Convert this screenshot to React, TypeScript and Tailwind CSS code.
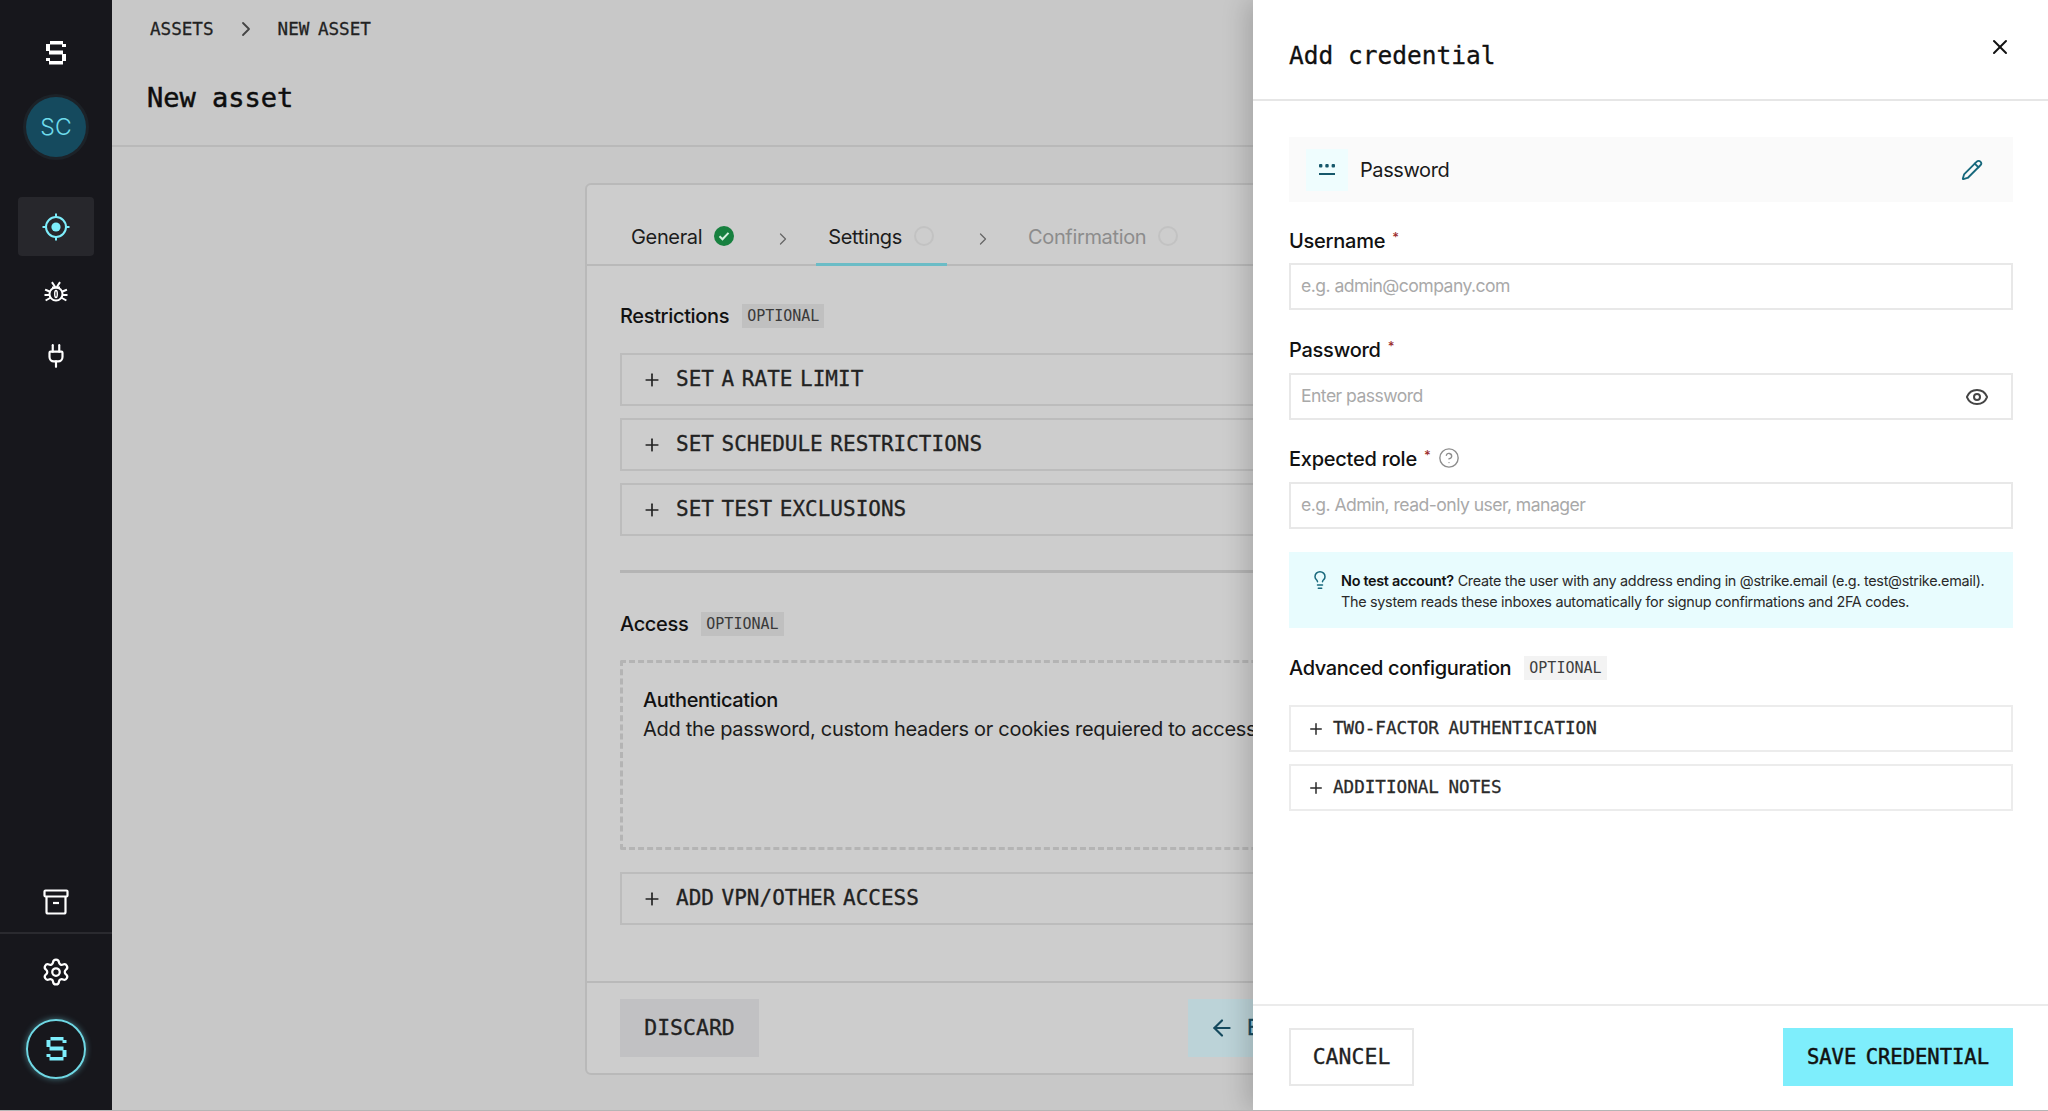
import { ReactNode } from "react";
import { ArrowLeft, ArrowRight, ChevronRight, CircleHelp, Eye, Lightbulb, Pencil, Plug, Plus, Settings, X } from "lucide-react";

const MONO = "font-['DejaVu_Sans_Mono','Liberation_Mono',monospace] [-webkit-text-stroke:0.3px_currentColor]";

function Logo({ color, className }: { color: string; className?: string }) {
  return (
    <svg viewBox="0 0 20 24" className={className} fill={color}>
      <rect x="4" y="0" width="13" height="3.5" />
      <rect x="0" y="3" width="4" height="7" />
      <rect x="16" y="3" width="4" height="3" />
      <rect x="3" y="9.5" width="14" height="4" />
      <rect x="16" y="13" width="4" height="7" />
      <rect x="0" y="17" width="4" height="3" />
      <rect x="3" y="20" width="14" height="3.5" />
    </svg>
  );
}

function BugIcon() {
  return (
    <svg viewBox="0 0 24 24" className="h-6 w-6" fill="none" stroke="#fff" strokeWidth="2" strokeLinecap="square">
      <circle cx="12" cy="14" r="6.5" />
      <path d="M8.5 3l2 3M15.5 3l-2 3M9 7.5h6M2 10l3.5 1.5M22 10l-3.5 1.5M1.5 15h3.5M22.5 15H19M2.5 20l3.5-2M21.5 20l-3.5-2" />
      <path d="M12 10.5c-1 0-1.3 1.5-1.3 3.5s.3 3.5 1.3 3.5 1.3-1.5 1.3-3.5-.3-3.5-1.3-3.5z" strokeWidth="1.4" />
    </svg>
  );
}

function TargetIcon() {
  return (
    <svg viewBox="0 0 28 28" className="h-7 w-7" fill="none" stroke="#7eeefc" strokeWidth="2">
      <circle cx="14" cy="14" r="10" />
      <circle cx="14" cy="14" r="4.6" fill="#7eeefc" stroke="none" />
      <path d="M14 0.5v3.5M14 24v3.5M0.5 14h3.5M24 14h3.5" />
    </svg>
  );
}

function ArchiveIcon() {
  return (
    <svg viewBox="0 0 26 26" className="h-[26px] w-[26px]" fill="none" stroke="#fff" strokeWidth="2.2">
      <rect x="1.5" y="1.5" width="23" height="6" rx="1" />
      <path d="M3.5 7.5V23a1.5 1.5 0 0 0 1.5 1.5h16a1.5 1.5 0 0 0 1.5-1.5V7.5" />
      <path d="M10 14h6" />
    </svg>
  );
}

function CheckBadge() {
  return (
    <svg viewBox="0 0 20 20" className="h-5 w-5">
      <circle cx="10" cy="10" r="10" fill="#17803f" />
      <path d="M5.5 10.3l3 3 6-6.4" fill="none" stroke="#d6f0df" strokeWidth="2" />
    </svg>
  );
}

function Optional({ tone }: { tone: "dim" | "light" }) {
  return (
    <span
      className={`font-['DejaVu_Sans_Mono','Liberation_Mono',monospace] flex h-[24px] items-center px-[5px] text-[15px] ${
        tone === "dim" ? "bg-[#c0c0c0] text-[#3a3a3a]" : "bg-[#f3f3f3] text-[#3f3f3f]"
      }`}
    >
      OPTIONAL
    </span>
  );
}

function DimRow({ label, className }: { label: string; className?: string }) {
  return (
    <div className={`flex h-[53px] items-center gap-[14px] border-2 border-[#bcbcbc] pl-[20px] text-[#222] ${className ?? ""}`}>
      <Plus className="h-[20px] w-[20px]" strokeWidth={2} />
      <span className={`${MONO} text-[21px] [word-spacing:-5px]`}>{label}</span>
    </div>
  );
}

function Step({ label, tone, badge, active }: { label: string; tone: string; badge: ReactNode; active?: boolean }) {
  return (
    <div className={`relative flex h-full items-center gap-[12px] pl-[12px] pr-[13px] ${tone}`}>
      <span className="mt-[2px] text-[20px] tracking-[-0.35px]">{label}</span>
      <span className="-mt-[1px]">{badge}</span>
      {active && <span className="absolute inset-x-0 -bottom-[2px] h-[3px] bg-[#6bbcc6]" />}
    </div>
  );
}

const Ring = () => <span className="block h-5 w-5 rounded-full border-2 border-[#c2c2c2]" />;

function Field({
  label,
  placeholder,
  help,
  eye,
  className,
  gapClass,
}: {
  label: string;
  placeholder: string;
  help?: boolean;
  eye?: boolean;
  className?: string;
  gapClass?: string;
}) {
  return (
    <div className={className}>
      <div className="flex h-[24px] items-center text-[20px] font-medium tracking-[-0.25px] text-[#111]">
        {label}
        <span className="mb-[6px] ml-[7px] text-[13px] text-[#9b2c2c]">*</span>
        {help && <CircleHelp className="ml-[8px] mb-[2px] h-[22px] w-[22px] text-[#8d8d8d]" strokeWidth={1.5} />}
      </div>
      <div className={`${gapClass ?? "mt-[11px]"} flex h-[47px] items-center border-2 border-[#e8e8e8] bg-white pl-[10px] pr-[22px]`}>
        <input
          readOnly
          placeholder={placeholder}
          className="min-w-0 flex-1 bg-transparent text-[17.6px] tracking-[-0.55px] outline-none placeholder:text-[#a9a9a9]"
        />
        {eye && <Eye className="h-[24px] w-[24px] text-[#444]" strokeWidth={2} />}
      </div>
    </div>
  );
}

function LightRow({ label, className }: { label: string; className?: string }) {
  return (
    <div className={`flex h-[47px] items-center gap-[8px] border-2 border-[#ececec] pl-[16px] text-[#2a2a2a] ${className ?? ""}`}>
      <Plus className="h-[18px] w-[18px]" strokeWidth={2} />
      <span className={`${MONO} text-[17.6px] [word-spacing:-1px]`}>{label}</span>
    </div>
  );
}

function NavItem({ children, className }: { children: ReactNode; className?: string }) {
  return <div className={`flex h-[59px] w-[76px] items-center justify-center ${className ?? ""}`}>{children}</div>;
}

export default function App() {
  return (
    <div className="relative flex h-[1111px] w-[2048px] overflow-hidden border-b border-[#b5b5b5] bg-[#c8c8c8] font-['Inter',sans-serif]">
      <aside className="flex w-[112px] shrink-0 flex-col items-center bg-[#17171c]">
        <Logo color="#ffffff" className="mt-[41px] h-[24px] w-[20px]" />
        <div className="mt-[32px] flex h-[60px] w-[60px] items-center justify-center rounded-full bg-[#154a5e] text-[23px] font-light text-[#6fdcec] shadow-[0_0_0_3px_#1c2228]">
          SC
        </div>
        <NavItem className="mt-[40px] rounded-[4px] bg-[#27272c]">
          <TargetIcon />
        </NavItem>
        <NavItem className="mt-[6px]">
          <BugIcon />
        </NavItem>
        <NavItem className="mt-[5px]">
          <Plug className="h-[26px] w-[26px] text-white" strokeWidth={2} />
        </NavItem>
        <NavItem className="mt-auto">
          <ArchiveIcon />
        </NavItem>
        <div className="mt-[1px] h-[2px] w-full bg-[#2a2a2f]" />
        <NavItem className="mt-[8px]">
          <Settings className="h-[30px] w-[30px] text-white" strokeWidth={1.8} />
        </NavItem>
        <div className="mb-[31px] mt-[18px] flex h-[60px] w-[60px] items-center justify-center rounded-full border-2 border-[#6fd8e4] shadow-[0_0_6px_rgba(126,238,252,0.45)]">
          <Logo color="#7eeefc" className="h-[24px] w-[21px]" />
        </div>
      </aside>

      <main className="flex min-w-0 flex-1 flex-col">
        <header className="h-[147px] shrink-0 border-b-2 border-[#b9b9b9] pl-[35px]">
          <div className={`${MONO} mt-[19px] flex h-[20px] items-center text-[17.6px] text-[#222] [word-spacing:-2px]`}>
            <span className="pl-[3px]">ASSETS</span>
            <ChevronRight className="mx-[20px] h-[24px] w-[24px] text-[#444]" strokeWidth={1.8} />
            <span>NEW ASSET</span>
          </div>
          <h1 className={`${MONO} mt-[39px] text-[27px] leading-[40px] text-[#0d0d0d] [-webkit-text-stroke:0.5px_#0d0d0d]`}>New asset</h1>
        </header>
        <div className="flex flex-1 justify-center pt-[36px]">
          <section className="flex h-[892px] w-[990px] shrink-0 flex-col rounded-[6px] border-2 border-[#b9b9b9] bg-[#cdcdcd]">
            <nav className="flex h-[81px] items-end border-b-2 border-[#b9b9b9] pl-[32px]">
              <div className="flex h-[56px] items-center">
                <Step label="General" tone="text-[#1c1c1c]" badge={<CheckBadge />} />
                <ChevronRight className="ml-[26px] mr-[23px] mt-[6px] h-[20px] w-[20px] text-[#666]" strokeWidth={1.5} />
                <Step label="Settings" tone="text-[#1c1c1c]" badge={<Ring />} active />
                <ChevronRight className="ml-[26px] mr-[23px] mt-[6px] h-[20px] w-[20px] text-[#666]" strokeWidth={1.5} />
                <Step label="Confirmation" tone="text-[#8c8c8c]" badge={<Ring />} />
              </div>
            </nav>
            <div className="flex-1 pl-[33px]">
              <div className="mt-[37px] flex h-[26px] items-center gap-[13px]">
                <span className="text-[20px] font-medium tracking-[-0.35px] text-[#111]">Restrictions</span>
                <Optional tone="dim" />
              </div>
              <DimRow label="SET A RATE LIMIT" className="mt-[24px]" />
              <DimRow label="SET SCHEDULE RESTRICTIONS" className="mt-[12px]" />
              <DimRow label="SET TEST EXCLUSIONS" className="mt-[12px]" />
              <div className="mt-[34px] h-[3px] bg-[#b4b4b4]" />
              <div className="mt-[38px] flex h-[26px] items-center gap-[13px]">
                <span className="text-[20px] font-medium tracking-[-0.35px] text-[#111]">Access</span>
                <Optional tone="dim" />
              </div>
              <div className="mt-[23px] h-[190px] overflow-hidden rounded-[2px] border-[3px] border-dashed border-[#b4b4b4] pl-[20px] pt-[23px]">
                <div className="text-[20px] font-medium leading-[28px] tracking-[-0.35px] text-[#111]">Authentication</div>
                <div className="whitespace-nowrap text-[20px] leading-[30px] tracking-[-0.3px] text-[#1c1c1c]">
                  Add the password, custom headers or cookies requiered to access
                </div>
              </div>
              <DimRow label="ADD VPN/OTHER ACCESS" className="mt-[22px]" />
            </div>
            <footer className="flex h-[92px] items-center justify-between border-t-2 border-[#b9b9b9] px-[33px]">
              <div className={`${MONO} flex h-[58px] w-[139px] items-center justify-center bg-[#c1c1c3] text-[21.5px] text-[#222]`}>DISCARD</div>
              <div className="flex gap-[12px]">
                <div className={`${MONO} flex h-[58px] w-[170px] items-center gap-[12px] bg-[#bcd3d8] pl-[21px] text-[21.5px] text-[#154a5e]`}>
                  <ArrowLeft className="h-[26px] w-[26px]" />
                  BACK
                </div>
                <div className={`${MONO} flex h-[58px] w-[170px] items-center justify-center gap-[10px] bg-[#6fc0cc] text-[21.5px] text-[#111]`}>
                  NEXT
                  <ArrowRight className="h-[26px] w-[26px]" />
                </div>
              </div>
            </footer>
          </section>
        </div>
      </main>

      <aside className="absolute inset-y-0 right-0 flex w-[795px] flex-col bg-white shadow-[-6px_0_24px_rgba(0,0,0,0.18)]">
        <div className="relative flex h-[101px] shrink-0 items-center border-b-2 border-[#e6e6e6] pl-[36px]">
          <h2 className={`${MONO} mt-[14px] text-[24.5px] text-[#111]`}>Add credential</h2>
          <X className="absolute right-[36px] top-[35px] h-[24px] w-[24px] text-[#111]" strokeWidth={2} />
        </div>
        <div className="flex-1 pl-[36px] pr-[35px] pt-[36px]">
          <div className="flex h-[65px] items-center bg-[#fafafa] pl-[17px] pr-[30px]">
            <div className="flex h-[42px] w-[42px] items-center justify-center bg-[#effdfe]">
              <svg viewBox="0 0 18 14" className="h-[14px] w-[18px]" fill="#17586b">
                <rect x="1" y="1" width="3.4" height="3.4" rx="1" />
                <rect x="7.3" y="1" width="3.4" height="3.4" rx="1" />
                <rect x="13.6" y="1" width="3.4" height="3.4" rx="1" />
                <rect x="1" y="10" width="16" height="2" />
              </svg>
            </div>
            <span className="ml-[12px] flex-1 text-[20px] tracking-[-0.4px] text-[#1a1a1a]">Password</span>
            <Pencil className="h-[22px] w-[22px] text-[#17687c]" strokeWidth={2} />
          </div>
          <Field label="Username" placeholder="e.g. admin@company.com" className="mt-[27px]" gapClass="mt-[10px]" />
          <Field label="Password" placeholder="Enter password" eye className="mt-[28px]" />
          <Field label="Expected role" placeholder="e.g. Admin, read-only user, manager" help className="mt-[27px]" />
          <div className="mt-[23px] flex h-[76px] items-center bg-[#e8fcfe] pl-[21px]">
            <Lightbulb className="mb-[20px] h-[20px] w-[20px] shrink-0 text-[#17687c]" strokeWidth={1.8} />
            <p className="ml-[11px] mt-[2px] text-[14.4px] leading-[21px] tracking-[-0.3px] text-[#2a2a2a]">
              <span className="font-semibold text-[#111]">No test account?</span> Create the user with any address ending in @strike.email (e.g. test@strike.email).
              <br />
              The system reads these inboxes automatically for signup confirmations and 2FA codes.
            </p>
          </div>
          <div className="mt-[28px] flex h-[24px] items-center gap-[13px]">
            <span className="text-[20px] font-medium tracking-[-0.35px] text-[#111]">Advanced configuration</span>
            <Optional tone="light" />
          </div>
          <LightRow label="TWO-FACTOR AUTHENTICATION" className="mt-[25px]" />
          <LightRow label="ADDITIONAL NOTES" className="mt-[12px]" />
        </div>
        <div className="flex h-[106px] shrink-0 items-start justify-between border-t-2 border-[#ebebeb] pl-[36px] pr-[35px] pt-[22px]">
          <div className={`${MONO} flex h-[58px] w-[125px] items-center justify-center border-2 border-[#e8e8e8] text-[21.5px] text-[#222]`}>CANCEL</div>
          <div className={`${MONO} flex h-[58px] w-[230px] items-center justify-center bg-[#7eeefc] text-[20.5px] text-[#111] [-webkit-text-stroke:0.5px_#111] [word-spacing:-3px]`}>SAVE CREDENTIAL</div>
        </div>
      </aside>
    </div>
  );
}
